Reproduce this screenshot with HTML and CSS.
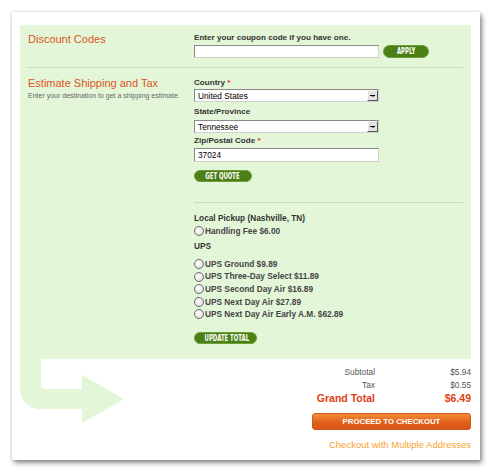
FILE: index.html
```html
<!DOCTYPE html>
<html lang="en">
<head>
  <meta charset="UTF-8">
  <title>Shopping Cart</title>
  <link rel="stylesheet" href="styles.css">
</head>
<body>
  <div class="card">
    <div class="panel">
      <div class="section discount">
        <div class="side">
          <h2>Discount Codes</h2>
        </div>
        <div class="form">
          <label class="label" for="coupon">Enter your coupon code if you have one.</label>
          <div class="coupon-row">
            <input type="text" id="coupon" class="text-input">
            <button class="pill apply"><span>APPLY</span></button>
          </div>
        </div>
      </div>

      <div class="section shipping">
        <div class="side">
          <h2>Estimate Shipping and Tax</h2>
          <p class="hint">Enter your destination to get a shipping estimate.</p>
        </div>
        <div class="form">
          <label class="label" for="country">Country <span class="req">*</span></label>
          <div class="select-wrap">
            <select id="country"><option>United States</option></select>
          </div>

          <label class="label state" for="state">State/Province</label>
          <div class="select-wrap state-select">
            <select id="state"><option>Tennessee</option></select>
          </div>

          <label class="label zip" for="zip">Zip/Postal Code <span class="req">*</span></label>
          <input type="text" id="zip" class="text-input zip-input" value="37024">

          <button class="pill quote"><span>GET QUOTE</span></button>

          <div class="rates">
            <div class="group-title">Local Pickup (Nashville, TN)</div>
            <label class="rate"><input type="radio" name="rate"> Handling Fee $6.00</label>

            <div class="group-title ups">UPS</div>
            <label class="rate"><input type="radio" name="rate"> UPS Ground $9.89</label>
            <label class="rate"><input type="radio" name="rate"> UPS Three-Day Select $11.89</label>
            <label class="rate"><input type="radio" name="rate"> UPS Second Day Air $16.89</label>
            <label class="rate"><input type="radio" name="rate"> UPS Next Day Air $27.89</label>
            <label class="rate"><input type="radio" name="rate"> UPS Next Day Air Early A.M. $62.89</label>

            <button class="pill update"><span>UPDATE TOTAL</span></button>
          </div>
        </div>
      </div>
    </div>

    <div class="bottom">
      <svg class="arrow" width="104" height="64" viewBox="0 0 104 64">
        <path d="M0 0 H21 V26 Q21 30 25 30 H62 V16 L104 40 L62 64 V50 H20 A20 20 0 0 1 0 30 Z" fill="#e4f6d8"/>
      </svg>

      <div class="totals">
        <div class="total-grid">
          <span class="t-label">Subtotal</span><span class="t-value">$5.94</span>
          <span class="t-label">Tax</span><span class="t-value">$0.55</span>
          <span class="t-label grand">Grand Total</span><span class="t-value grand">$6.49</span>
        </div>
        <button class="checkout">PROCEED TO CHECKOUT</button>
        <a href="#" class="multi">Checkout with Multiple Addresses</a>
      </div>
    </div>
  </div>
</body>
</html>
```

FILE: styles.css
```css
body {
  margin: 0;
  padding: 12px 13px 12px 12px;
  background: #fff;
  font-family: "Liberation Sans", Arial, sans-serif;
  color: #333;
}

.card {
  width: 468px;
  height: 448px;
  box-sizing: border-box;
  padding: 13px 9px 0 8px;
  background: #fff;
  box-shadow: 2px 3px 5px rgba(0, 0, 0, 0.45), 0 0 3px rgba(0, 0, 0, 0.15);
}

.panel {
  background: #e4f6d8;
  padding: 0 8px;
  height: 334px;
  box-sizing: border-box;
}

.section {
  display: flex;
}

.side {
  width: 166px;
}

.form {
  flex: 1;
}

h2 {
  margin: 0;
  font-size: 11px;
  line-height: 12px;
  font-weight: normal;
  color: #d9561b;
}

.discount {
  padding: 8px 0 9px;
  border-bottom: 1px solid #c8dcbb;
}

.label {
  display: block;
  font-size: 8.1px;
  line-height: 10px;
  font-weight: bold;
  color: #333;
}

.req {
  color: #e0401a;
}

.coupon-row {
  display: flex;
  align-items: center;
  margin-top: 2px;
}

.text-input {
  width: 185px;
  height: 13px;
  box-sizing: border-box;
  margin: 0;
  padding: 0 3px;
  border: 1px solid;
  border-color: #8a8a8a #d0d0d0 #d0d0d0 #8a8a8a;
  background: #fff;
  font-family: "Liberation Sans", Arial, sans-serif;
  font-size: 8.3px;
  color: #000;
}

.pill {
  display: block;
  height: 13px;
  padding: 0;
  border: 1px solid #6f9d35;
  border-radius: 7px;
  background: #4c7f16;
  color: #fff;
  font-family: "DejaVu Sans Condensed", "DejaVu Sans", sans-serif;
  font-weight: bold;
  font-size: 8.5px;
  line-height: 11px;
  text-align: center;
  white-space: nowrap;
  cursor: pointer;
}

/* the button font is a tall condensed face */
.pill span {
  display: inline-block;
  transform: scaleX(0.7);
}

.apply {
  width: 46px;
  margin-left: 4px;
}

.shipping {
  padding-top: 9px;
}

.shipping .label {
  line-height: 12px;
}

.hint {
  margin: 2px 0 0;
  font-size: 7px;
  line-height: 10px;
  color: #666;
}

.select-wrap {
  position: relative;
  width: 185px;
}

.select-wrap select {
  display: block;
  width: 100%;
  height: 13px;
  margin: 0;
  padding: 0 3px;
  -webkit-appearance: none;
  appearance: none;
  border: 1px solid;
  border-color: #8a8a8a #d0d0d0 #d0d0d0 #8a8a8a;
  border-radius: 0;
  background: #fff;
  font-family: "Liberation Sans", Arial, sans-serif;
  font-size: 8.3px;
  color: #000;
}

/* little dropdown button on the right */
.select-wrap::after {
  content: "";
  position: absolute;
  right: 1px;
  top: 1px;
  width: 9px;
  height: 9px;
  border: 1px solid;
  border-color: #fff #555 #555 #fff;
  background: #e2e2e2 linear-gradient(#000, #000) no-repeat 2px 4px / 5px 1px;
}

.select-wrap::before {
  content: "";
  position: absolute;
  right: 4px;
  top: 6px;
  width: 0;
  height: 0;
  border-left: 2px solid transparent;
  border-right: 2px solid transparent;
  border-top: 2px solid #000;
  z-index: 1;
}

.label.state {
  margin-top: 4px;
}

.state-select {
  margin-top: 2px;
}

.label.zip {
  margin-top: 2px;
}

.zip-input {
  height: 14px;
  margin-top: 1px;
  display: block;
}

.quote {
  width: 58px;
  margin-top: 8px;
  height: 12px;
  line-height: 10px;
}

.rates {
  margin-top: 20px;
  border-top: 1px solid #c8dcbb;
  padding-top: 9px;
  width: 269px;
}

.group-title {
  font-size: 8.3px;
  font-weight: bold;
  line-height: 12.6px;
}

.group-title.ups {
  margin-top: 3px;
  margin-bottom: 5px;
}

.rate {
  display: flex;
  align-items: center;
  font-size: 8.3px;
  font-weight: bold;
  line-height: 12.6px;
  color: #444;
}

.rate input {
  -webkit-appearance: none;
  appearance: none;
  width: 10px;
  height: 10px;
  margin: 0 1px 0 0;
  border: 1px solid #6a6a6a;
  border-radius: 50%;
  background: radial-gradient(circle at 40% 35%, #fff, #d6d6d6);
}

.update {
  width: 63px;
  margin-top: 11px;
  height: 12px;
  line-height: 10px;
}

.bottom {
  display: flex;
  justify-content: space-between;
}

.arrow {
  display: block;
}

.totals {
  width: 159px;
  padding-top: 7px;
  font-size: 8.3px;
}

.total-grid {
  display: grid;
  grid-template-columns: 63px 96px;
  line-height: 13px;
  color: #555;
}

.t-label,
.t-value {
  text-align: right;
}

.grand {
  color: #e03c12;
  font-weight: bold;
  font-size: 10.5px;
}

.checkout {
  display: block;
  width: 159px;
  height: 17px;
  margin-top: 8px;
  padding: 0;
  border: 1px solid #cf5a18;
  border-radius: 3px;
  background: linear-gradient(#f68d33, #e0601c 55%, #d9531a);
  color: #fff;
  font-family: "Liberation Sans", Arial, sans-serif;
  font-weight: bold;
  font-size: 7.8px;
  cursor: pointer;
}

.multi {
  display: block;
  margin-top: 9px;
  text-align: right;
  font-size: 9.5px;
  line-height: 12px;
  color: #f7a22d;
  text-decoration: none;
}
```
